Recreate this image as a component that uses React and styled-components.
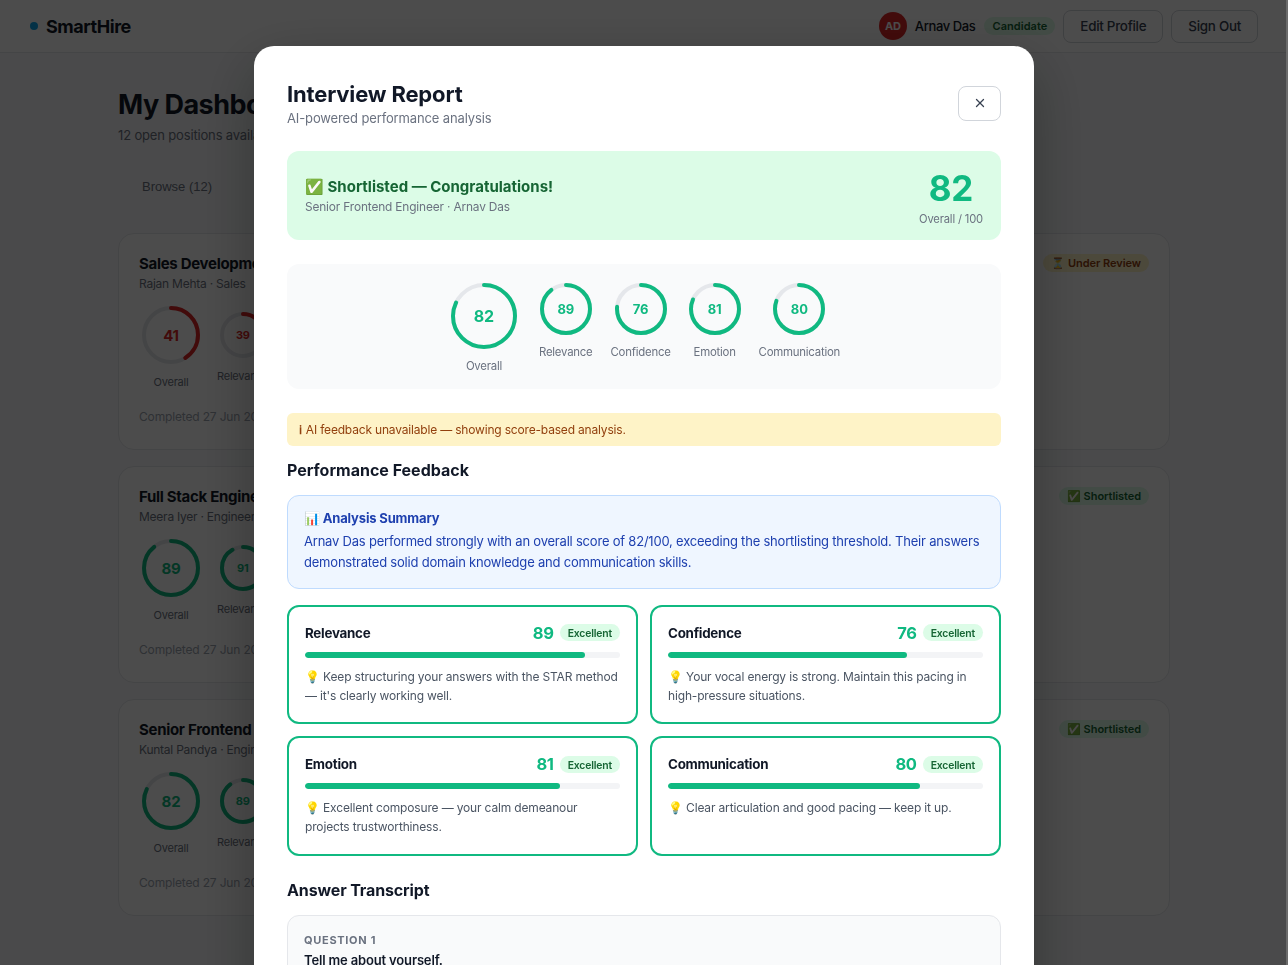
import styled, { createGlobalStyle } from 'styled-components'
import { X } from 'lucide-react'

const GlobalStyle = createGlobalStyle`
  * { box-sizing: border-box; }
  html, body { margin: 0; height: 100%; }
  body {
    background: #f8f9fb;
    color: #111827;
    font-family: 'Inter', 'Noto Sans', sans-serif;
    letter-spacing: -0.01em;
    overflow: hidden;
  }
`

const C_GREEN = '#10b981'
const C_RED = '#dc2626'

function Ring({ size, stroke, value, color = C_GREEN, font }) {
  const r = (size - stroke) / 2
  const c = 2 * Math.PI * r
  return (
    <RingWrap $size={size}>
      <svg width={size} height={size}>
        <circle cx={size / 2} cy={size / 2} r={r} fill="none" stroke="#e5e7eb" strokeWidth={stroke} />
        <circle
          cx={size / 2}
          cy={size / 2}
          r={r}
          fill="none"
          stroke={color}
          strokeWidth={stroke}
          strokeLinecap="round"
          strokeDasharray={c}
          strokeDashoffset={c * (1 - value / 100)}
          transform={`rotate(-90 ${size / 2} ${size / 2})`}
        />
      </svg>
      <RingValue $color={color} $font={font}>{value}</RingValue>
    </RingWrap>
  )
}

const jobs = [
  { title: 'Sales Development Representative', who: 'Rajan Mehta · Sales', a: 41, b: 39, color: C_RED, status: '⏳ Under Review', tone: 'amber' },
  { title: 'Full Stack Engineer', who: 'Meera Iyer · Engineering', a: 89, b: 91, color: C_GREEN, status: '✅ Shortlisted', tone: 'green' },
  { title: 'Senior Frontend Engineer', who: 'Kuntal Pandya · Engineering', a: 82, b: 89, color: C_GREEN, status: '✅ Shortlisted', tone: 'green' },
]

const scores = [
  { label: 'Overall', value: 82, big: true },
  { label: 'Relevance', value: 89 },
  { label: 'Confidence', value: 76 },
  { label: 'Emotion', value: 81 },
  { label: 'Communication', value: 80 },
]

const feedback = [
  { label: 'Relevance', value: 89, tip: "Keep structuring your answers with the STAR method — it's clearly working well." },
  { label: 'Confidence', value: 76, tip: 'Your vocal energy is strong. Maintain this pacing in high-pressure situations.' },
  { label: 'Emotion', value: 81, tip: 'Excellent composure — your calm demeanour projects trustworthiness.' },
  { label: 'Communication', value: 80, tip: 'Clear articulation and good pacing — keep it up.' },
]

export default function App() {
  return (
    <>
      <GlobalStyle />
      <Nav>
        <Brand><BrandDot />SmartHire</Brand>
        <NavRight>
          <Avatar>AD</Avatar>
          <UserName>Arnav Das</UserName>
          <RolePill>Candidate</RolePill>
          <GhostButton>Edit Profile</GhostButton>
          <GhostButton>Sign Out</GhostButton>
        </NavRight>
      </Nav>
      <Main>
        <PageTitle>My Dashboard</PageTitle>
        <PageSub>12 open positions available</PageSub>
        <Tabs><Tab>Browse (12)</Tab></Tabs>
        <CardList>
          {jobs.map((j) => (
            <JobCard key={j.title}>
              <JobHead>
                <div>
                  <JobTitle>{j.title}</JobTitle>
                  <JobWho>{j.who}</JobWho>
                </div>
                <Status $tone={j.tone}>{j.status}</Status>
              </JobHead>
              <JobRings>
                <JobRing>
                  <Ring size={58} stroke={4} value={j.a} color={j.color} font={15} />
                  <JobRingLabel>Overall</JobRingLabel>
                </JobRing>
                <JobRing>
                  <Ring size={46} stroke={4} value={j.b} color={j.color} font={11} />
                  <JobRingLabel>Relevance</JobRingLabel>
                </JobRing>
              </JobRings>
              <JobDate>Completed 27 Jun 2025</JobDate>
            </JobCard>
          ))}
        </CardList>
      </Main>
      <Overlay>
        <Modal>
          <ModalHead>
            <div>
              <ModalTitle>Interview Report</ModalTitle>
              <ModalSub>AI-powered performance analysis</ModalSub>
            </div>
            <CloseButton><X size={14} strokeWidth={2.2} /></CloseButton>
          </ModalHead>

          <Verdict>
            <div>
              <VerdictTitle>✅ Shortlisted — Congratulations!</VerdictTitle>
              <VerdictSub>Senior Frontend Engineer · Arnav Das</VerdictSub>
            </div>
            <VerdictScore>
              <BigScore>82</BigScore>
              <BigScoreLabel>Overall / 100</BigScoreLabel>
            </VerdictScore>
          </Verdict>

          <ScorePanel>
            {scores.map((s) => (
              <ScoreItem key={s.label} $big={s.big}>
                <Ring size={s.big ? 66 : 52} stroke={4} value={s.value} font={s.big ? 16 : 13} />
                <ScoreLabel>{s.label}</ScoreLabel>
              </ScoreItem>
            ))}
          </ScorePanel>

          <Notice><InfoGlyph>ℹ</InfoGlyph> AI feedback unavailable — showing score-based analysis.</Notice>

          <SectionTitle>Performance Feedback</SectionTitle>
          <Summary>
            <SummaryTitle>📊 Analysis Summary</SummaryTitle>
            <SummaryText>
              Arnav Das performed strongly with an overall score of 82/100, exceeding the shortlisting threshold. Their answers demonstrated solid domain knowledge and communication skills.
            </SummaryText>
          </Summary>

          <FeedbackGrid>
            {feedback.map((f) => (
              <FeedbackCard key={f.label}>
                <FeedbackHead>
                  <FeedbackName>{f.label}</FeedbackName>
                  <FeedbackValue>{f.value}</FeedbackValue>
                  <Grade>Excellent</Grade>
                </FeedbackHead>
                <Track><Fill style={{ width: `${f.value}%` }} /></Track>
                <Tip>💡 {f.tip}</Tip>
              </FeedbackCard>
            ))}
          </FeedbackGrid>

          <TranscriptTitle>Answer Transcript</TranscriptTitle>
          <Question>
            <QuestionNo>QUESTION 1</QuestionNo>
            <QuestionText>Tell me about yourself.</QuestionText>
          </Question>
        </Modal>
      </Overlay>
    </>
  )
}

const Nav = styled.nav`
  height: 53px;
  background: #fff;
  border-bottom: 1px solid #e5e7eb;
  display: flex;
  align-items: center;
  justify-content: space-between;
  padding: 0 30px;
`
const Brand = styled.div`
  display: flex;
  align-items: center;
  gap: 8px;
  font-size: 18px;
  font-weight: 700;
  letter-spacing: -0.025em;
  color: #111827;
`
const BrandDot = styled.span`
  width: 8px;
  height: 8px;
  border-radius: 50%;
  background: #0ea5e9;
`
const NavRight = styled.div`
  display: flex;
  align-items: center;
`
const Avatar = styled.div`
  width: 28px;
  height: 28px;
  border-radius: 50%;
  background: #dc2626;
  color: #fff;
  font-size: 11px;
  font-weight: 700;
  display: flex;
  align-items: center;
  justify-content: center;
  margin-right: 8px;
`
const UserName = styled.span`
  font-size: 13px;
  font-weight: 500;
  letter-spacing: -0.03em;
  margin-right: 9px;
`
const RolePill = styled.span`
  background: #dcfce7;
  color: #166534;
  font-size: 11px;
  font-weight: 600;
  letter-spacing: 0.005em;
  line-height: 14px;
  padding: 2px 8px;
  border-radius: 999px;
`
const GhostButton = styled.button`
  height: 33px;
  padding: 0 16px;
  margin-left: 8px;
  border: 1px solid #d1d5db;
  border-radius: 8px;
  background: #fff;
  color: #374151;
  font: 500 13.4px 'Inter', sans-serif;
  letter-spacing: -0.02em;
`
const Main = styled.main`
  width: 1052px;
  margin: 0 auto;
  padding-top: 35px;
`
const PageTitle = styled.h1`
  margin: 0;
  font-size: 27px;
  line-height: 34px;
  font-weight: 700;
  letter-spacing: -0.02em;
`
const PageSub = styled.p`
  margin: 4px 0 0;
  font-size: 13px;
  line-height: 18px;
  color: #6b7280;
`
const Tabs = styled.div`
  display: flex;
  margin-top: 22px;
  height: 40px;
  align-items: center;
`
const Tab = styled.span`
  padding: 0 24px;
  font: 500 13px 'Liberation Sans', sans-serif;
  letter-spacing: 0;
  color: #6b7280;
`
const CardList = styled.div`
  display: flex;
  flex-direction: column;
  gap: 16px;
  margin-top: 27px;
`
const JobCard = styled.article`
  height: 217px;
  padding: 20px;
  background: #fff;
  border: 1px solid #e5e7eb;
  border-radius: 16px;
`
const JobHead = styled.div`
  display: flex;
  justify-content: space-between;
  align-items: flex-start;
`
const JobTitle = styled.div`
  font-size: 15px;
  line-height: 19px;
  font-weight: 700;
  letter-spacing: -0.02em;
`
const JobWho = styled.div`
  font-size: 12px;
  line-height: 16px;
  margin-top: 3px;
  letter-spacing: -0.02em;
  color: #6b7280;
`
const Status = styled.span`
  padding: 2px 8px;
  border-radius: 999px;
  font-size: 11px;
  line-height: 14px;
  font-weight: 600;
  letter-spacing: -0.005em;
  background: ${(p) => (p.$tone === 'amber' ? '#fef3c7' : '#dcfce7')};
  color: ${(p) => (p.$tone === 'amber' ? '#92400e' : '#166534')};
`
const JobRings = styled.div`
  display: flex;
  gap: 17px;
  margin-top: 14px;
  padding-left: 3px;
  align-items: center;
`
const JobRing = styled.div`
  display: flex;
  flex-direction: column;
  align-items: center;
  gap: 11px;
`
const JobRingLabel = styled.span`
  font-size: 11px;
  line-height: 14px;
  letter-spacing: -0.02em;
  color: #6b7280;
`
const JobDate = styled.div`
  margin-top: 20px;
  font-size: 12px;
  color: #9ca3af;
`
const Overlay = styled.div`
  position: fixed;
  inset: 0;
  background: rgba(0, 0, 0, 0.7);
  backdrop-filter: blur(0.5px);
  display: flex;
  justify-content: center;
  align-items: flex-start;
  padding-top: 46px;
  overflow: hidden;

  &::after {
    content: '';
    position: absolute;
    top: 0;
    right: 0;
    bottom: 0;
    width: 2px;
    background: #6b6b6b;
  }
`
const Modal = styled.section`
  width: 780px;
  flex: none;
  padding: 33px 33px;
  background: #fff;
  border-radius: 20px;
  box-shadow: 0 20px 60px rgba(0, 0, 0, 0.3);
`
const ModalHead = styled.header`
  display: flex;
  justify-content: space-between;
  align-items: center;
`
const ModalTitle = styled.h2`
  margin: 0;
  font-size: 22px;
  line-height: 30px;
  font-weight: 700;
  color: #111827;
`
const ModalSub = styled.p`
  margin: 1px 0 0;
  font-size: 13px;
  line-height: 17px;
  letter-spacing: -0.01em;
  color: #6b7280;
`
const CloseButton = styled.button`
  width: 43px;
  height: 35px;
  border: 1px solid #d1d5db;
  border-radius: 8px;
  background: #fff;
  color: #374151;
  display: flex;
  align-items: center;
  justify-content: center;
`
const Verdict = styled.div`
  margin-top: 24px;
  height: 89px;
  padding: 0 18px;
  background: #dcfce7;
  border-radius: 12px;
  display: flex;
  align-items: center;
  justify-content: space-between;
`
const VerdictTitle = styled.div`
  font-size: 15px;
  line-height: 20px;
  font-weight: 700;
  letter-spacing: 0;
  color: #166534;
`
const VerdictSub = styled.div`
  margin-top: 2px;
  font-size: 11.9px;
  line-height: 15px;
  color: #6b7280;
`
const VerdictScore = styled.div`
  padding-top: 4px;
  text-align: right;
`
const BigScore = styled.div`
  font-size: 35px;
  line-height: 38px;
  font-weight: 700;
  color: ${C_GREEN};
  text-align: center;
`
const BigScoreLabel = styled.div`
  margin-top: 5px;
  font-size: 11.2px;
  line-height: 15px;
  color: #6b7280;
`
const ScorePanel = styled.div`
  margin-top: 24px;
  height: 125px;
  padding: 19px 0 0 3px;
  background: #f9fafb;
  border-radius: 12px;
  display: flex;
  justify-content: center;
  align-items: flex-start;
  gap: 18px;
`
const ScoreItem = styled.div`
  display: flex;
  flex-direction: column;
  align-items: center;
  gap: 10px;
  margin-right: ${(p) => (p.$big ? '4px' : '0')};
`
const RingWrap = styled.div`
  position: relative;
  width: ${(p) => p.$size}px;
  height: ${(p) => p.$size}px;
  svg { display: block; }
`
const RingValue = styled.span`
  position: absolute;
  inset: 0;
  display: flex;
  align-items: center;
  justify-content: center;
  font-size: ${(p) => p.$font}px;
  font-weight: 700;
  color: ${(p) => p.$color};
`
const ScoreLabel = styled.span`
  font-size: 11.4px;
  line-height: 14px;
  letter-spacing: -0.02em;
  color: #6b7280;
`
const Notice = styled.div`
  margin-top: 24px;
  height: 33px;
  padding: 0 12px;
  display: flex;
  align-items: center;
  gap: 4px;
  background: #fef3c7;
  border-radius: 6px;
  font-size: 12px;
  letter-spacing: -0.015em;
  color: #92400e;
`
const InfoGlyph = styled.span`
  font-family: 'DejaVu Serif', serif;
  font-weight: 700;
`
const SectionTitle = styled.h3`
  margin: 13px 0 0;
  font-size: 16px;
  line-height: 22px;
  font-weight: 700;
  letter-spacing: 0;
  color: #111827;
`
const Summary = styled.div`
  margin-top: 14px;
  padding: 13px 16px 15px;
  background: #eff6ff;
  border: 1px solid #bfdbfe;
  border-radius: 12px;
`
const SummaryTitle = styled.div`
  font-size: 13px;
  line-height: 18px;
  font-weight: 700;
  color: #1e40af;
`
const SummaryText = styled.p`
  margin: 4px 0 0;
  font-size: 13px;
  line-height: 21px;
  letter-spacing: -0.016em;
  color: #1e40af;
`
const FeedbackGrid = styled.div`
  margin-top: 15.7px;
  display: grid;
  grid-template-columns: 1fr 1fr;
  gap: 12px;
`
const FeedbackCard = styled.div`
  height: 119.5px;
  padding: 16px;
  border: 2px solid ${C_GREEN};
  border-radius: 12px;
  background: #fff;
`
const FeedbackHead = styled.div`
  display: flex;
  align-items: center;
  height: 20px;
`
const FeedbackName = styled.span`
  flex: 1;
  font-size: 13.4px;
  font-weight: 700;
  letter-spacing: -0.02em;
  color: #111827;
`
const FeedbackValue = styled.span`
  font-size: 16.5px;
  font-weight: 700;
  letter-spacing: -0.02em;
  color: ${C_GREEN};
  margin-right: 6px;
`
const Grade = styled.span`
  padding: 2px 8px 0;
  height: 17px;
  border-radius: 999px;
  background: #dcfce7;
  color: #166534;
  font-size: 10.4px;
  font-weight: 600;
  line-height: 15px;
`
const Track = styled.div`
  margin-top: 9px;
  height: 6px;
  border-radius: 3px;
  background: #f3f4f6;
  overflow: hidden;
`
const Fill = styled.div`
  height: 100%;
  border-radius: 3px;
  background: ${C_GREEN};
`
const Tip = styled.p`
  margin: 9px 0 0;
  font-size: 12px;
  line-height: 19px;
  color: #4b5563;
`
const TranscriptTitle = styled(SectionTitle)`
  margin-top: 23.4px;
  letter-spacing: -0.008em;
`
const Question = styled.div`
  margin-top: 14px;
  padding: 16px;
  background: #f9fafb;
  border: 1px solid #e5e7eb;
  border-radius: 12px;
`
const QuestionNo = styled.div`
  font-size: 11px;
  line-height: 16px;
  font-weight: 700;
  letter-spacing: 0.7px;
  color: #6b7280;
`
const QuestionText = styled.div`
  margin-top: 3px;
  font-size: 13px;
  line-height: 18px;
  font-weight: 600;
  color: #111827;
`
